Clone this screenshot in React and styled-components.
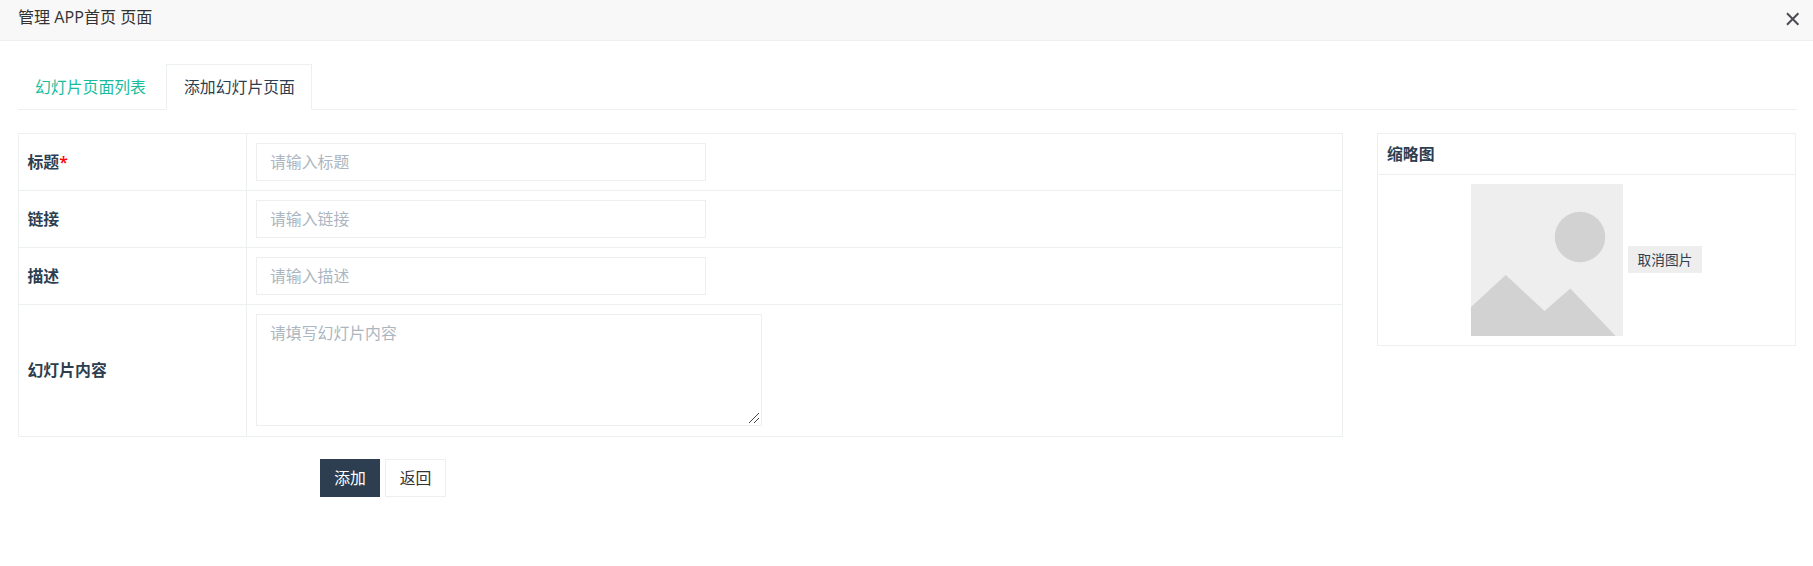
import React from "react";
import styled, { createGlobalStyle } from "styled-components";

const LINE = "#ecf0f1";
const NAVY = "#2c3e50";

const GlobalStyle = createGlobalStyle`
  *, *::before, *::after { box-sizing: border-box; }
  body {
    margin: 0;
    background: #fff;
    color: ${NAVY};
    font: 15.85px/22px "Open Sans", "Noto Sans CJK SC", sans-serif;
  }
  input, textarea, button { font: inherit; margin: 0; border-radius: 0; }
`;

const Dialog = styled.div`
  height: 566px;
  overflow: hidden;
`;

const TitleBar = styled.header`
  display: flex;
  justify-content: space-between;
  height: 41px;
  padding: 0 12px 0 18px;
  background: #f8f8f8;
  border-bottom: 1px solid #eee;
  color: #333;
`;

const Title = styled.h1`
  margin: 0;
  padding-top: 6px;
  font-size: 16.1px;
  font-weight: 400;
  line-height: 22px;
`;

const CloseButton = styled.button`
  align-self: flex-start;
  margin-top: 11px;
  width: 16px;
  height: 16px;
  padding: 0;
  border: 0;
  background: none;
  svg { display: block; }
`;

const Body = styled.main`
  padding: 23px 16px 0 18px;
`;

const Tabs = styled.nav`
  display: flex;
  gap: 2px;
  height: 46px;
  border-bottom: 1px solid ${LINE};
`;

const Tab = styled.a`
  height: 46px;
  width: 146px;
  padding: 11px 0 0 ${(p) => (p.$active ? 17 : 16)}px;
  white-space: nowrap;
  border: 1px solid ${(p) => (p.$active ? LINE : "transparent")};
  border-bottom-color: ${(p) => (p.$active ? "#fff" : "transparent")};
  background: ${(p) => (p.$active ? "#fff" : "none")};
  color: ${(p) => (p.$active ? NAVY : "#18bc9c")};
`;

const Columns = styled.div`
  display: flex;
  align-items: flex-start;
  justify-content: space-between;
  margin: 23px 1px 0 0;
`;

const FormTable = styled.div`
  width: 1325px;
  border: 1px solid ${LINE};
`;

const Row = styled.div`
  display: grid;
  grid-template-columns: 228px 1fr;
  height: ${(p) => p.$height || 57}px;
  & + & { border-top: 1px solid ${LINE}; }
`;

const Label = styled.label`
  display: flex;
  align-items: center;
  padding: 0 0 1px 8.5px;
  border-right: 1px solid ${LINE};
  font-weight: 600;
`;

const Required = styled.span`
  color: red;
`;

const Cell = styled.div`
  padding: 9px;
`;

const TextInput = styled.input`
  display: block;
  width: 450px;
  height: 38px;
  padding: 0 13px;
  border: 1px solid #eee;
  outline: none;
  &::placeholder { color: #acb6c0; opacity: 1; }
`;

const TextAreaFrame = styled.div`
  position: relative;
  width: 506px;
  height: 112px;
`;

const TextArea = styled.textarea`
  display: block;
  width: 100%;
  height: 100%;
  padding: 7px 13px;
  border: 1px solid #eee;
  outline: none;
  resize: none;
  &::placeholder { color: #acb6c0; opacity: 1; }
`;

const Grip = styled.svg`
  position: absolute;
  right: 3px;
  bottom: 3px;
  pointer-events: none;
`;

const Panel = styled.aside`
  width: 419px;
  border: 1px solid ${LINE};
`;

const PanelTitle = styled.h2`
  margin: 0;
  height: 41px;
  padding: 9px;
  border-bottom: 1px solid ${LINE};
  font-size: 15.85px;
  font-weight: 600;
  line-height: 22px;
`;

const PanelBody = styled.div`
  display: flex;
  align-items: center;
  justify-content: center;
  gap: 5px;
  height: 170px;
  svg { display: block; }
`;

const SmallButton = styled.button`
  width: 74px;
  height: 27px;
  margin-bottom: 1px;
  padding: 0;
  border: 0;
  background: #eee;
  color: ${NAVY};
  font-size: 13.7px;
  line-height: 26px;
`;

const Actions = styled.div`
  display: flex;
  gap: 5px;
  margin: 22px 0 0 302px;
`;

const ActionButton = styled.button`
  width: ${(p) => (p.$primary ? 60 : 61)}px;
  height: 38px;
  padding: 0;
  border: 1px solid ${(p) => (p.$primary ? NAVY : "#eee")};
  background: ${(p) => (p.$primary ? NAVY : "#fff")};
  color: ${(p) => (p.$primary ? "#fff" : "#333")};
`;

const CloseIcon = () => (
  <svg width="16" height="16" viewBox="0 0 16 16">
    <path d="M2 2.3 13.4 13.7M13.4 2.3 2 13.7" stroke="#4b4b55" strokeWidth="2" fill="none" />
  </svg>
);

const Placeholder = () => (
  <svg width="152" height="152" viewBox="0 0 152 152">
    <rect width="152" height="152" fill="#eee" />
    <circle cx="109" cy="53" r="25.2" fill="#d2d2d2" />
    <path d="M0 123 34.7 91 73.5 127 99.3 104.5 144.7 152H0Z" fill="#d2d2d2" />
  </svg>
);

const fields = [
  { id: "title", label: "标题", hint: "请输入标题", required: true },
  { id: "link", label: "链接", hint: "请输入链接" },
  { id: "desc", label: "描述", hint: "请输入描述" },
];

export default function App() {
  return (
    <Dialog>
      <GlobalStyle />
      <TitleBar>
        <Title>管理 APP首页 页面</Title>
        <CloseButton aria-label="关闭"><CloseIcon /></CloseButton>
      </TitleBar>
      <Body>
        <Tabs>
          <Tab>幻灯片页面列表</Tab>
          <Tab $active>添加幻灯片页面</Tab>
        </Tabs>
        <Columns>
          <FormTable>
            {fields.map((f, i) => (
              <Row key={f.id} $height={i === 0 ? 56 : 57}>
                <Label htmlFor={f.id}>
                  {f.label}
                  {f.required && <Required>*</Required>}
                </Label>
                <Cell><TextInput id={f.id} placeholder={f.hint} /></Cell>
              </Row>
            ))}
            <Row $height={132}>
              <Label htmlFor="content">幻灯片内容</Label>
              <Cell>
                <TextAreaFrame>
                  <TextArea id="content" placeholder="请填写幻灯片内容" />
                  <Grip width="10" height="10" viewBox="0 0 10 10">
                    <path d="M0 10 10 0M5 10 10 5" stroke="#444" strokeWidth="1" />
                  </Grip>
                </TextAreaFrame>
              </Cell>
            </Row>
          </FormTable>
          <Panel>
            <PanelTitle>缩略图</PanelTitle>
            <PanelBody>
              <Placeholder />
              <SmallButton>取消图片</SmallButton>
            </PanelBody>
          </Panel>
        </Columns>
        <Actions>
          <ActionButton $primary>添加</ActionButton>
          <ActionButton>返回</ActionButton>
        </Actions>
      </Body>
    </Dialog>
  );
}
